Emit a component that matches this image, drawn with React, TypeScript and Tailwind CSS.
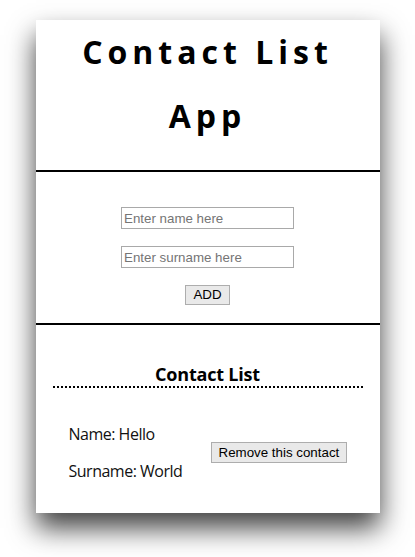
const contacts = [{ name: 'Hello', surname: 'World' }]

export default function App() {
  return (
    <div className="min-h-[557px] bg-white pt-[20px] pb-[44px]">
      <div className="mx-auto w-[344px] bg-white shadow-[0_15px_26px_rgba(0,0,0,0.75)]">
        {/* header */}
        <div className="border-b-2 border-black pb-[22px]">
          <h1 className="text-center font-['Open_Sans',sans-serif] text-[32px] font-bold leading-[64px] tracking-[5px] text-black">
            Contact List
            <br />
            App
          </h1>
        </div>

        {/* form */}
        <div className="flex flex-col items-center gap-[17px] border-b-2 border-black pt-[35px] pb-[18px] font-['Liberation_Sans',Arial,sans-serif] text-[13.33px]">
          <input
            type="text"
            placeholder="Enter name here"
            className="h-[22px] w-[173px] border border-[#a9a9a9] px-[2px] text-black outline-none placeholder:text-[#757575]"
          />
          <input
            type="text"
            placeholder="Enter surname here"
            className="h-[22px] w-[173px] border border-[#a9a9a9] px-[2px] text-black outline-none placeholder:text-[#757575]"
          />
          <button className="h-[20px] border border-[#adadad] bg-[#e9e9e9] px-[7px] leading-none text-black">
            ADD
          </button>
        </div>

        {/* list */}
        <div className="pt-[37px] pb-[31px] font-['Open_Sans',sans-serif]">
          <h2 className="mx-[17px] border-b-2 border-dotted border-black text-center text-[18px] font-bold leading-[24px] tracking-[-0.2px] text-black">
            Contact List
          </h2>
          {contacts.map((c) => (
            <div key={c.name + c.surname} className="mt-[35px] flex items-center pl-[33px]">
              <div className="flex w-[142px] flex-col gap-[15px] text-[16px] leading-[22px] tracking-[-0.5px] text-[#111]">
                <p>Name: {c.name}</p>
                <p>Surname: {c.surname}</p>
              </div>
              <button className="h-[21px] border border-[#adadad] bg-[#e9e9e9] px-[7px] font-['Liberation_Sans',Arial,sans-serif] text-[13.33px] leading-none text-black">
                Remove this contact
              </button>
            </div>
          ))}
        </div>
      </div>
    </div>
  )
}
